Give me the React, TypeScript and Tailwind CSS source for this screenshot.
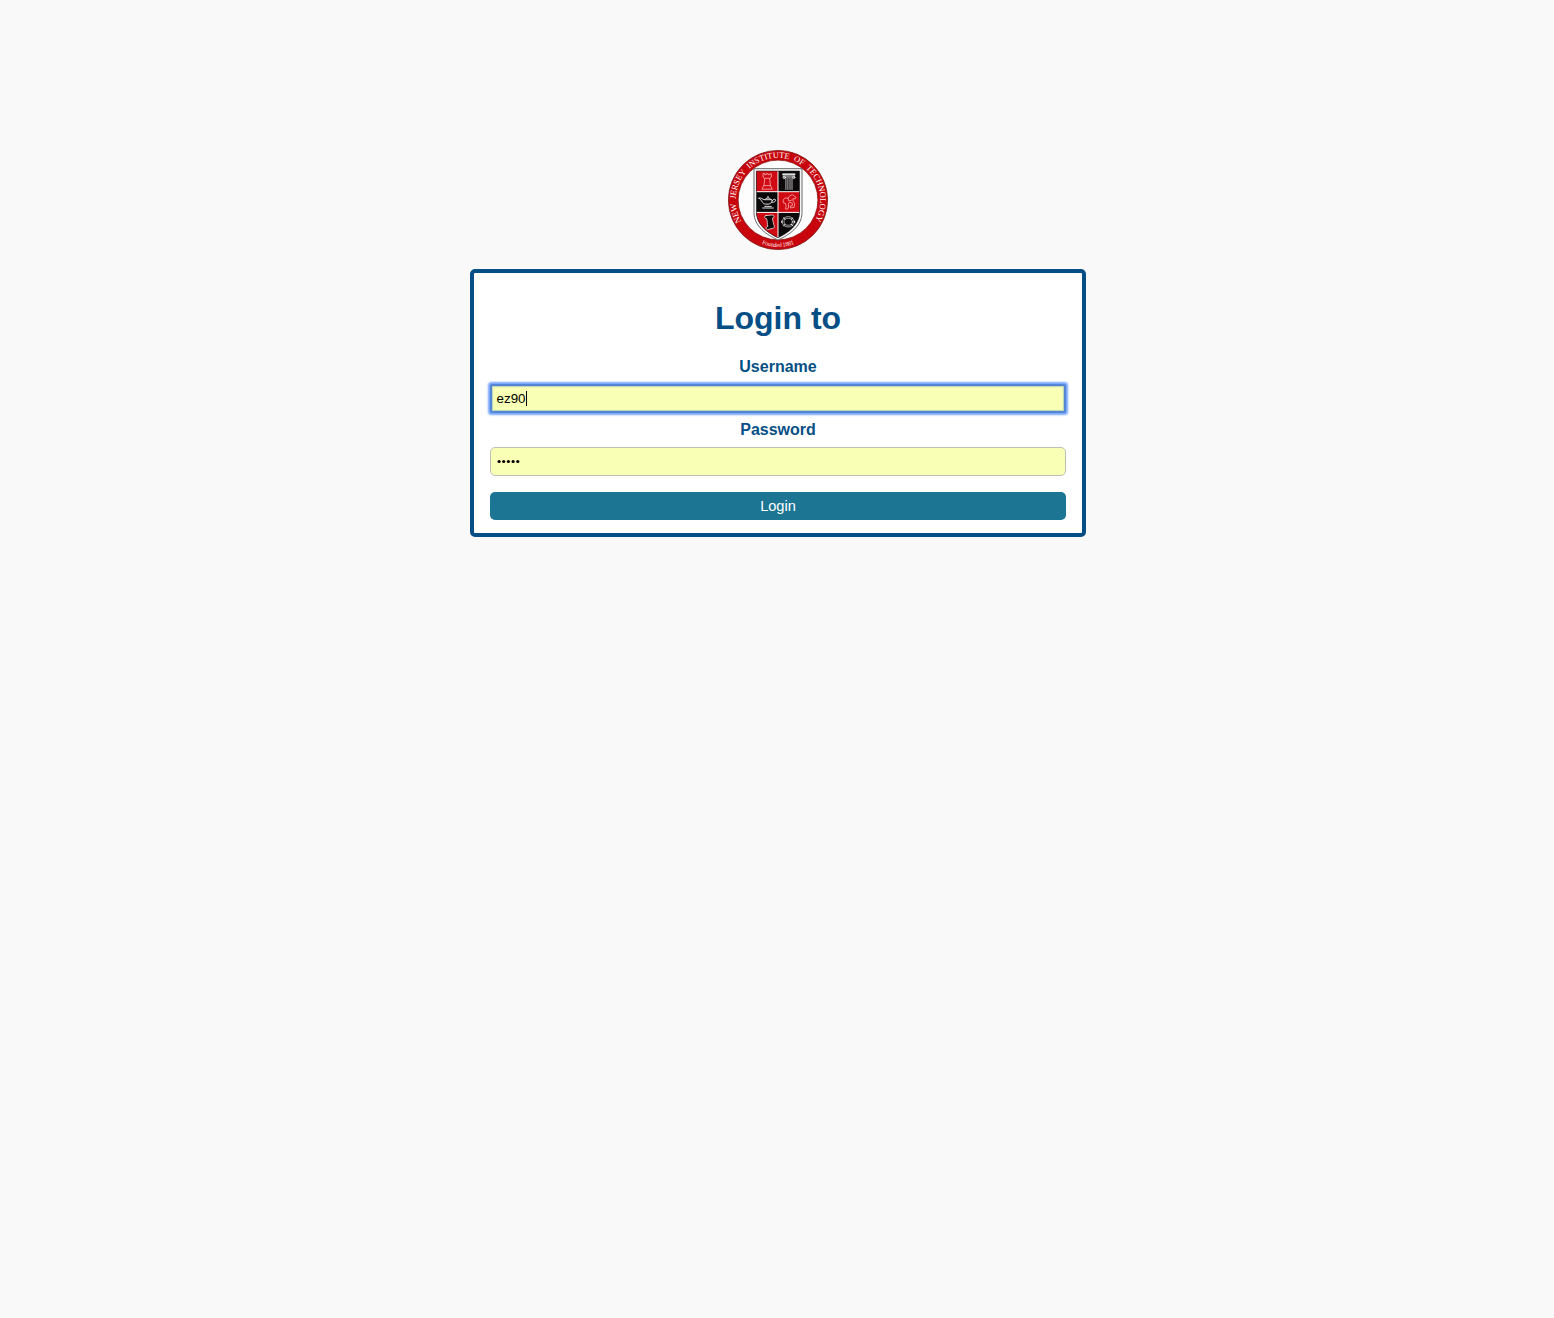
function Seal() {
  return (
    <svg viewBox="0 0 110 110" className="h-[110px] w-[110px] shrink-0" role="img" aria-label="New Jersey Institute of Technology">
      <defs>
        <path id="motto" d="M18.4 76.3 A42.3 42.3 0 1 1 91.6 76.3" />
        <path id="founded" d="M30 94.7 A47 47 0 0 0 80 94.7" />
        <clipPath id="shield">
          <path d="M33.4 26H76.6V67C76.6 80 65 88 55 92.8C45 88 33.4 80 33.4 67Z" />
        </clipPath>
      </defs>
      <circle cx="55" cy="55" r="49.6" fill="#c8040c" stroke="#7c1a1a" strokeWidth="0.8" />
      <circle cx="55" cy="55" r="39.9" fill="#fdfdfd" stroke="#8c1c1c" strokeWidth="0.8" />
      <text fill="#fff" fontFamily="Liberation Serif, serif" fontSize="8.4" wordSpacing="2.2">
        <textPath href="#motto" textLength="176" lengthAdjust="spacing">NEW JERSEY INSTITUTE OF TECHNOLOGY</textPath>
      </text>
      <text fill="#ffe4e4" fontFamily="Liberation Serif, serif" fontSize="6.2" textAnchor="middle">
        <textPath href="#founded" startOffset="50%" textLength="33">Founded 1881</textPath>
      </text>
      <path d="M31 23.7H79V67.5C79 81.5 66 90 55 95C44 90 31 81.5 31 67.5Z" fill="#fff" stroke="#666" strokeWidth="1" />
      <g clipPath="url(#shield)">
        <path fill="#0b0809" d="M33 26h44v68H33z" />
        <path fill="#cf0a12" d="M33 26h22v21H33zM55 47h22v20.5H55zM33 67.5h22V94H33z" />
      </g>
      <path d="M55 26V93M33.4 46.7H76.6M33.4 67.4H76.6" stroke="#fff" strokeWidth="1" fill="none" />
      <path d="M33.4 26H76.6V67C76.6 80 65 88 55 92.8C45 88 33.4 80 33.4 67Z" fill="none" stroke="#222" strokeWidth="0.6" />
      <g fill="none" stroke="#fff" strokeWidth="0.7" strokeLinejoin="round" strokeLinecap="round">
        {/* chess rook */}
        <path stroke="#ffc5c5" d="M40 28.8v3.2l1.6 1.3h5.2l1.6-1.3v-3.2h-1.6v.9h-1.6v-.9h-2v.9h-1.6v-.9zM41.7 33.6l-.8 7h6.5l-.7-7M40.7 40.6l-1.8 3.6h10.4l-1.9-3.6" />
        {/* column */}
        <path fill="#bbb" d="M60 28.8h12v1.2H60z" />
        <path d="M60.2 31.2h11.4M60.7 32.9h10.4M62.9 34V44.5M64.9 34V44.5M67 34V44.5M69 34V44.5" />
        <circle cx="61.2" cy="32.4" r="1.2" />
        <circle cx="70.7" cy="32.4" r="1.2" />
        {/* oil lamp */}
        <path strokeWidth="0.85" d="M36 53.2c2.4-.9 3.3 1.1 5.2 1.5h7.6c1 2.5-1.5 4.4-3.8 4.4h-2.5c-3.4 0-3.3-4.2-6.5-5.9zM42 54.4c1-1.9 4.9-1.9 6 0M45 52.8v-1.5M49.2 55.8c1.6-2.7 4.2-1.7 3.2.2-.7 1.2-2.4 1.4-3.9 1.4M41.8 61.4h6.5M39.6 63h10.8" />
        {/* rider and animal */}
        <path stroke="#ffb7b7" strokeWidth="0.75" d="M60.3 57.5c-.8-2.6.6-4.6 2.8-4.5l2.1.2 1.5-2.3c1.5-1.6 4.5-1.2 4.6.4l1.8 1-.7 1.5-2.4-.2-.1 2.1 1.8 2.9-.6 3.8-3.7.5-.2-1.8 2.2-.5-.1-2.5-2.7-.9-1.3 1.8.4 3-1.2 2.3-2.1-.5.8-2.6-.8-2.7zM65.2 53.2l.6 2.9 3.1-1.1" />
        {/* scroll */}
        <path fill="#0b0809" d="M43 70.6l6.1-.6c2-.1 2.7 2.2 1.1 2.9l-.6.1c-.4 2.2 1 4.1 1 6.4 1.6 2.1.5 4.4-1.5 4l-4.1 1.1c-1.7.4-2.7-2-1-2.8l.8-.2c-.9-2.5 0-5.2-1.3-8-2.4.3-2.7-2.4-.5-2.9z" />
        {/* laurel ring */}
        <ellipse cx="65.2" cy="76.8" rx="6" ry="5.2" strokeWidth="0.6" />
        <ellipse cx="65.2" cy="76.8" rx="4.2" ry="3.5" strokeWidth="0.6" />
        <path strokeWidth="0.9" d="M60.6 73l1.5 1.2M69.8 73l-1.5 1.2M60.6 80.6l1.5-1.2M69.8 80.6l-1.5-1.2M58.7 76.1v1.4M71.7 76.1v1.4" />
      </g>
    </svg>
  );
}

function PasswordDots() {
  return (
    <svg viewBox="0 0 24 7" className="h-[7px] w-[24px]" aria-hidden="true">
      {[2.1, 6.7, 11.4, 16.1, 20.8].map((cx) => (
        <circle key={cx} cx={cx} cy="3.5" r="1.6" fill="#000" />
      ))}
    </svg>
  );
}

export default function App() {
  return (
    <main className="flex min-h-screen flex-col items-center bg-[#f9f9f9] pl-0.5 pt-[145px] font-['Liberation_Sans',sans-serif]">
      <Seal />
      <form className="mt-[14px] flex h-[268px] w-[616px] flex-col rounded-[5px] border-4 border-[#064f86] bg-white px-4 text-center text-[#064f86]" onSubmit={(e) => e.preventDefault()}>
        <h1 className="mt-[27px] text-[32px] leading-[37px] font-bold">Login to</h1>
        <div className="mt-[21px] text-base leading-[18px] font-bold">Username</div>
        <div className="mt-2 flex h-[29px] items-center rounded-[2px] border-2 border-[#5586d4] bg-[#f9ffb5] pl-[4.6px] text-[13.33px] text-black shadow-[0_0_2px_1.5px_#78a6fb,inset_0_0_1px_1px_#b8d3bd]">
          <span>ez90</span>
          <span className="h-[15px] w-px bg-black" />
        </div>
        <div className="mt-2 text-base leading-[18px] font-bold">Password</div>
        <div className="mt-2 flex h-[29px] items-center rounded-[5px] border border-[#bfc0b5] bg-[#f9ffb5] pl-[6px]">
          <PasswordDots />
        </div>
        <button className="mt-4 h-7 rounded-[5px] bg-[#1c7593] text-[14.6px] leading-7 text-white">Login</button>
      </form>
    </main>
  );
}
